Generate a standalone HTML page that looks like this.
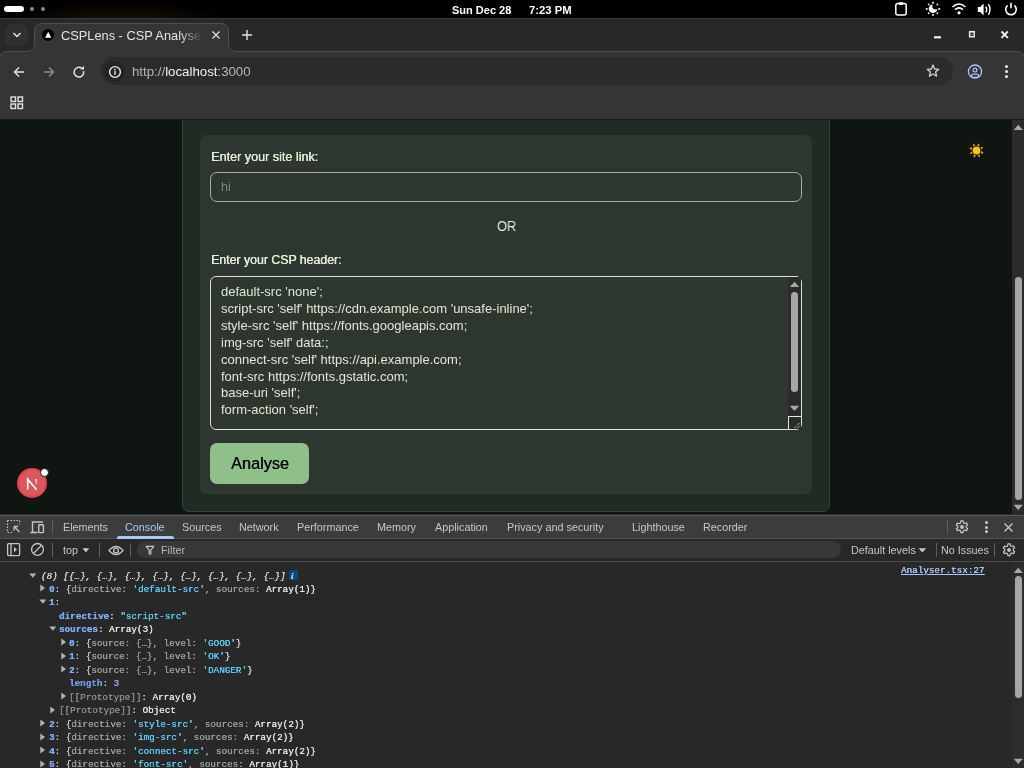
<!DOCTYPE html>
<html><head><meta charset="utf-8">
<style>
*{box-sizing:border-box;margin:0;padding:0}
html,body{width:1024px;height:768px;overflow:hidden;background:#000;font-family:"Liberation Sans",sans-serif}
.a{position:absolute}
#sys{left:0;top:0;width:1024px;height:18px;background:#000}
#tabstrip{left:0;top:18px;width:1024px;height:45px;background:#282828}
#toolbar{left:0;top:51px;width:1024px;height:68px;background:#353535}
#content{left:0;top:119px;width:1024px;height:395px;background:#0f1611;overflow:hidden}
#devtools{left:0;top:514px;width:1024px;height:254px;background:#282828;overflow:hidden}
.txt{white-space:pre;line-height:1;will-change:transform}
</style></head><body>

<!-- system bar -->
<div id="sys" class="a">
  <div class="a" style="left:0;top:0;width:400px;height:18px;background:radial-gradient(ellipse 120px 30px at 120px 30px,rgba(60,45,10,0.55),rgba(0,0,0,0))"></div>
  <div class="a" style="left:4px;top:6px;width:20px;height:6px;border-radius:3px;background:#fff"></div>
  <div class="a" style="left:30px;top:7px;width:4px;height:4px;border-radius:2px;background:#8a8a8a"></div>
  <div class="a" style="left:41px;top:7px;width:4px;height:4px;border-radius:2px;background:#8a8a8a"></div>
  <div class="a txt" style="left:452px;top:4px;font:bold 11px 'Liberation Sans';color:#fff">Sun Dec 28</div>
  <div class="a txt" style="left:529px;top:4px;font:bold 11.3px 'Liberation Sans';color:#fff">7:23 PM</div>
  <svg class="a" style="left:893px;top:0px" width="16" height="17" viewBox="0 0 16 17"><rect x="2.8" y="3.6" width="10.4" height="11.4" rx="2" fill="none" stroke="#fff" stroke-width="1.5"/><rect x="5.6" y="2.3" width="4.8" height="2.8" rx="1" fill="#fff"/></svg>
  <svg class="a" style="left:925px;top:0px" width="16" height="17" viewBox="0 0 16 17"><defs><mask id="mm"><rect width="16" height="17" fill="#fff"/><circle cx="10.6" cy="6.2" r="3.3" fill="#000"/></mask></defs><g fill="#e8e8e8"><rect x="7.1" y="1.9" width="1.8" height="1.8"/><rect x="7.1" y="14" width="1.8" height="1.8"/><rect x="0.8" y="8" width="1.8" height="1.8"/><rect x="13.3" y="8" width="1.8" height="1.8"/><circle cx="3.7" cy="4.5" r="0.95"/><circle cx="12.4" cy="4.5" r="0.95"/><circle cx="3.7" cy="13.3" r="0.95"/><circle cx="12.4" cy="13.3" r="0.95"/></g><circle cx="8" cy="8.7" r="4.3" fill="#fff" mask="url(#mm)"/></svg>
  <svg class="a" style="left:951px;top:1px" width="16" height="15" viewBox="0 0 16 15"><path d="M1.5 6 Q8 0 14.5 6" fill="none" stroke="#fff" stroke-width="1.6"/><path d="M4 8.6 Q8 5 12 8.6" fill="none" stroke="#fff" stroke-width="1.6"/><circle cx="8" cy="11.8" r="1.6" fill="#fff"/></svg>
  <svg class="a" style="left:977px;top:2px" width="16" height="15" viewBox="0 0 16 15"><path d="M0.8 5 L3.2 5 L6.6 1.6 L6.6 13.4 L3.2 10 L0.8 10 Z" fill="#fff"/><path d="M8.8 4.6 Q10.6 7.5 8.8 10.4" fill="none" stroke="#fff" stroke-width="1.4"/><path d="M11.4 2.2 Q14.6 7.5 11.4 12.8" fill="none" stroke="#fff" stroke-width="1.4"/></svg>
  <svg class="a" style="left:1003px;top:0.5px" width="16" height="16" viewBox="0 0 16 16"><path d="M4.6 4.4 A5.3 5.3 0 1 0 11.4 4.4" fill="none" stroke="#fff" stroke-width="1.6"/><path d="M8 1.8 L8 7.2" stroke="#fff" stroke-width="1.6"/></svg>
</div>

<!-- tab strip -->
<div id="tabstrip" class="a">
  <div class="a" style="left:0;top:0;width:1024px;height:1px;background:#383838"></div>
  <div class="a" style="left:5px;top:6px;width:23px;height:22px;border-radius:7px;background:#303030"></div>
  <svg class="a" style="left:11px;top:12px" width="12" height="10" viewBox="0 0 12 10"><path d="M2.5 3 L6 6.5 L9.5 3" fill="none" stroke="#e8e8e8" stroke-width="1.4"/></svg>
</div>
<svg class="a" style="left:0;top:18px" width="1024" height="101" viewBox="0 0 1024 101">
  <path d="M-0.5 110 L-0.5 41.5 Q-0.5 33.5 7.5 33.5 L26.5 33.5 Q34.5 33.5 34.5 25.5 L34.5 13.5 Q34.5 5.5 42.5 5.5 L220.5 5.5 Q228.5 5.5 228.5 13.5 L228.5 25.5 Q228.5 33.5 236.5 33.5 L1016.5 33.5 Q1024.5 33.5 1024.5 41.5 L1024.5 110 L-0.5 110 Z" fill="#353535" stroke="#4f4f4f" stroke-width="1"/>
</svg>
<div class="a" style="left:41.5px;top:28.8px;width:12.4px;height:12.4px;border-radius:50%;background:#000"></div>
<svg class="a" style="left:41.5px;top:28.8px" width="12.4" height="12.4" viewBox="0 0 13 13"><path d="M6.5 2.9 L9.8 9.2 L3.2 9.2 Z" fill="#fff"/></svg>
<div class="a txt" style="left:61px;top:28px;font:12.8px 'Liberation Sans';color:#e3e3e3;width:142px;overflow:hidden;-webkit-mask-image:linear-gradient(90deg,#000 118px,transparent 142px)">CSPLens - CSP Analyser</div>
<svg class="a" style="left:210px;top:29px" width="12" height="12" viewBox="0 0 12 12"><path d="M2.5 2.5 L9.5 9.5 M9.5 2.5 L2.5 9.5" stroke="#e3e3e3" stroke-width="1.3"/></svg>
<svg class="a" style="left:240px;top:28px" width="14" height="14" viewBox="0 0 14 14"><path d="M7 2 L7 12 M2 7 L12 7" stroke="#e3e3e3" stroke-width="1.4"/></svg>
<svg class="a" style="left:930px;top:30px" width="14" height="14" viewBox="0 0 14 14"><path d="M4 7.3 L11 7.3" stroke="#f0f0f0" stroke-width="2.2"/></svg>
<svg class="a" style="left:964px;top:27px" width="14" height="14" viewBox="0 0 14 14"><rect x="5.6" y="4.6" width="4.6" height="5.2" fill="none" stroke="#f0f0f0" stroke-width="1.4"/><rect x="5" y="4" width="5.8" height="1.4" fill="#f0f0f0"/><path d="M6.8 8.6 L8.6 6.8" stroke="#cfcfcf" stroke-width="0.8"/></svg>
<svg class="a" style="left:997px;top:27px" width="14" height="14" viewBox="0 0 14 14"><path d="M4.5 4.5 L10.8 10.8 M10.8 4.5 L4.5 10.8" stroke="#f0f0f0" stroke-width="1.9"/></svg>

<!-- toolbar -->
<div id="toolbar" class="a" style="background:transparent">
  <svg class="a" style="left:12px;top:13.5px" width="14" height="14" viewBox="0 0 14 14"><path d="M12 7 L2.5 7 M7 2.5 L2.5 7 L7 11.5" fill="none" stroke="#e3e3e3" stroke-width="1.5"/></svg>
  <svg class="a" style="left:42px;top:13.5px" width="14" height="14" viewBox="0 0 14 14"><path d="M2 7 L11.5 7 M7 2.5 L11.5 7 L7 11.5" fill="none" stroke="#8c8c8c" stroke-width="1.5"/></svg>
  <svg class="a" style="left:72px;top:13.5px" width="14" height="14" viewBox="0 0 14 14"><path d="M11.6 6.2 A4.8 4.8 0 1 1 10 3.5" fill="none" stroke="#e3e3e3" stroke-width="1.5"/><path d="M8.2 4.6 L12 4.6 L12 0.8 Z" fill="#e3e3e3"/></svg>
  <div class="a" style="left:101px;top:6px;width:852px;height:28px;border-radius:14px;background:#2b2b2b"></div>
  <div class="a" style="left:104px;top:10px;width:21px;height:21px;border-radius:50%;background:#242424"></div>
  <svg class="a" style="left:108px;top:13.5px" width="14" height="14" viewBox="0 0 14 14"><circle cx="7" cy="7" r="5.4" fill="none" stroke="#e8e8e8" stroke-width="1.4"/><rect x="6.3" y="5.8" width="1.4" height="4" fill="#e8e8e8"/><rect x="6.3" y="3.7" width="1.4" height="1.4" fill="#e8e8e8"/></svg>
  <div class="a txt" style="left:132px;top:13px;font:13.25px 'Liberation Sans';color:#b5b5b5">http://<span style="color:#f0f0f0">localhost</span>:3000</div>
  <svg class="a" style="left:925px;top:12px" width="16" height="16" viewBox="0 0 16 16"><path d="M8 2 L9.6 6 L13.8 6.3 L10.6 9 L11.6 13.2 L8 11 L4.4 13.2 L5.4 9 L2.2 6.3 L6.4 6 Z" fill="none" stroke="#d0d0d0" stroke-width="1.3" stroke-linejoin="round"/></svg>
  <svg class="a" style="left:967px;top:13px" width="16" height="16" viewBox="0 0 16 16"><circle cx="8" cy="7.6" r="6.6" fill="none" stroke="#a8c7fa" stroke-width="1.3"/><circle cx="8" cy="6.1" r="1.9" fill="none" stroke="#a8c7fa" stroke-width="1.2"/><rect x="4.5" y="10.1" width="7" height="3.3" rx="1.65" fill="none" stroke="#a8c7fa" stroke-width="1.2"/></svg>
  <div class="a" style="left:1005px;top:14px;width:3px;height:3px;border-radius:50%;background:#e8e8e8"></div>
  <div class="a" style="left:1005px;top:19px;width:3px;height:3px;border-radius:50%;background:#e8e8e8"></div>
  <div class="a" style="left:1005px;top:24px;width:3px;height:3px;border-radius:50%;background:#e8e8e8"></div>
  <svg class="a" style="left:9px;top:44px" width="16" height="16" viewBox="0 0 16 16"><rect x="2" y="2" width="4.5" height="4.5" fill="none" stroke="#e3e3e3" stroke-width="1.4"/><rect x="9" y="2" width="4.5" height="4.5" fill="none" stroke="#e3e3e3" stroke-width="1.4"/><rect x="2" y="9" width="4.5" height="4.5" fill="none" stroke="#e3e3e3" stroke-width="1.4"/><rect x="9" y="9" width="4.5" height="4.5" fill="none" stroke="#e3e3e3" stroke-width="1.4"/></svg>
</div>

<!-- content -->
<div id="content" class="a">
  <div class="a" style="left:182px;top:-10px;width:648px;height:403px;background:#212a23;border:1px solid #354438;border-radius:7px"></div>
  <div class="a" style="left:200px;top:16px;width:612px;height:359px;background:#2d372f;border-radius:6px"></div>
  <div class="a txt" style="left:210.5px;top:31px;font:12.6px 'Liberation Sans';color:#e6ead6;text-shadow:0.4px 0 0 #e6ead6">Enter your site link:</div>
  <div class="a" style="left:210px;top:53px;width:592px;height:30px;border:1px solid #a9b29b;border-radius:7px"></div>
  <div class="a txt" style="left:221px;top:61px;font:12.5px 'Liberation Sans';color:#7b8878">hi</div>
  <div class="a txt" style="left:497px;top:99px;font:14.6px 'Liberation Sans';color:#e6ead6;transform:scaleX(0.88);transform-origin:0 0">OR</div>
  <div class="a txt" style="left:210.5px;top:134px;font:12.3px 'Liberation Sans';color:#e6ead6;text-shadow:0.4px 0 0 #e6ead6">Enter your CSP header:</div>
  <div class="a" style="left:210px;top:157px;width:592px;height:154px;border:1px solid #dde4c8;border-radius:6px"></div>
  <div class="a" style="left:221px;top:165px;font:13px 'Liberation Sans';line-height:16.9px;color:#e3e7d3;white-space:pre;will-change:transform">default-src 'none';
script-src 'self' https://cdn.example.com 'unsafe-inline';
style-src 'self' https://fonts.googleapis.com;
img-src 'self' data:;
connect-src 'self' https://api.example.com;
font-src https://fonts.gstatic.com;
base-uri 'self';
form-action 'self';</div>
  <div class="a" style="left:788px;top:158px;width:13px;height:139px;background:#2b2b2b"></div>
  <svg class="a" style="left:789px;top:162px" width="11" height="7" viewBox="0 0 11 7"><path d="M0.8 6 L5.5 0.8 L10.2 6 Z" fill="#a8a8a8"/></svg>
  <div class="a" style="left:791px;top:172.5px;width:7px;height:100.5px;border-radius:3.5px;background:#a6a6a6"></div>
  <svg class="a" style="left:789px;top:286px" width="11" height="7" viewBox="0 0 11 7"><path d="M0.8 0.8 L10.2 0.8 L5.5 6 Z" fill="#a8a8a8"/></svg>
  <div class="a" style="left:788px;top:297px;width:13px;height:13px;background:#2b2b2b;border-left:1px solid #e6e6e6;border-top:1px solid #e6e6e6"></div>
  <svg class="a" style="left:788px;top:297px" width="13" height="13" viewBox="0 0 13 13"><path d="M6.5 12 L12 6.5 M9.5 12 L12 9.5" stroke="#e0e0e0" stroke-width="1" stroke-dasharray="1.2 0.8"/></svg>
  <div class="a" style="left:210px;top:324px;width:99px;height:41px;background:#8fc08a;border-radius:7px"></div>
  <div class="a txt" style="left:230.5px;top:335px;font:16.3px 'Liberation Sans';color:#0d0d0d;text-shadow:0.35px 0 0 #0d0d0d">Analyse</div>
  <div class="a" style="left:1012px;top:0;width:12px;height:395px;background:#2b2b2b"></div>
  <svg class="a" style="left:1013px;top:5px" width="11" height="7" viewBox="0 0 11 7"><path d="M0.7 6 L5.2 0.7 L9.9 6 Z" fill="#a8a8a8"/></svg>
  <div class="a" style="left:1015px;top:158px;width:7px;height:223px;border-radius:3.5px;background:#a6a6a6"></div>
  <svg class="a" style="left:1013px;top:385px" width="11" height="7" viewBox="0 0 11 7"><path d="M0.7 0.8 L9.9 0.8 L5.2 6 Z" fill="#a8a8a8"/></svg>
  <div class="a" style="left:17px;top:349px;width:30px;height:30px;border-radius:50%;background:#d9575d;border:2px solid #e2434c"></div>
  <svg class="a" style="left:25px;top:358px" width="14" height="14" viewBox="0 0 14 14"><defs><linearGradient id="ng" gradientUnits="userSpaceOnUse" x1="0" y1="2" x2="0" y2="9"><stop offset="0" stop-color="#fff"/><stop offset="1" stop-color="#fff" stop-opacity="0"/></linearGradient></defs><path d="M2.7 12.6 L2.7 2.2 L11.6 12.8" fill="none" stroke="#fff" stroke-width="1.6" stroke-linejoin="miter"/><rect x="10.4" y="2" width="1.6" height="7.5" fill="url(#ng)"/></svg>
  <div class="a" style="left:39.5px;top:348.5px;width:9px;height:9px;border-radius:50%;background:#fff;border:1.2px solid #0f1611"></div>
  <svg class="a" style="left:968px;top:23px" width="17" height="17" viewBox="0 0 17 17"><g fill="#f5a524" transform="rotate(20 8.5 8.5)"><path d="M8.5 0.8 L9.9 3.6 L7.1 3.6 Z"/><path d="M8.5 16.2 L9.9 13.4 L7.1 13.4 Z"/><path d="M0.8 8.5 L3.6 7.1 L3.6 9.9 Z"/><path d="M16.2 8.5 L13.4 7.1 L13.4 9.9 Z"/><path d="M3 3 L5.9 4.1 L4.1 5.9 Z"/><path d="M14 14 L11.1 12.9 L12.9 11.1 Z"/><path d="M14 3 L12.9 5.9 L11.1 4.1 Z"/><path d="M3 14 L4.1 11.1 L5.9 12.9 Z"/></g><circle cx="8.5" cy="8.5" r="3.9" fill="#fbc31c"/></svg>
  <div class="a" style="left:0;top:0;width:1024px;height:1px;background:#1b1c1b"></div>
</div>

<!-- devtools -->
<div id="devtools" class="a">
  <div class="a" style="left:0;top:1px;width:1024px;height:1px;background:#5a5a5a"></div>
  <div class="a" style="left:0;top:2px;width:1024px;height:22px;background:#3c3c3c"></div>
  <div class="a" style="left:0;top:24px;width:1024px;height:1px;background:#555"></div>
  <div class="a" style="left:0;top:47px;width:1024px;height:1px;background:#4a4a4a"></div>
  <div class="a" style="left:117px;top:22px;width:57px;height:3px;background:#a8c7fa;border-radius:2px 2px 0 0"></div>
  <svg class="a" style="left:5px;top:4px" width="18" height="18" viewBox="0 0 18 18"><path d="M2.5 2.5h1.5M5.5 2.5h1.5M8.5 2.5h1.5M11.5 2.5h1.5M2.5 2.5v1.5M2.5 5.5v1.5M2.5 8.5v1.5M2.5 11.5v1.5M2.5 14.5h1.5M5.5 14.5h1.5M14.5 2.5v1.5M14.5 5.5v1" stroke="#c4c4c4" stroke-width="1.2" fill="none"/><path d="M9 8.5 L14.5 14 M9 8.5 L13 8.5 M9 8.5 L9 12.5" stroke="#c4c4c4" stroke-width="1.3" fill="none"/></svg>
  <svg class="a" style="left:29px;top:4px" width="18" height="18" viewBox="0 0 18 18"><path d="M3.5 15 L3.5 4 L14 4" stroke="#c4c4c4" stroke-width="1.4" fill="none"/><path d="M1.5 14.5 L8.5 14.5" stroke="#c4c4c4" stroke-width="1.6"/><rect x="9.8" y="6.8" width="4.6" height="7.8" rx="0.6" fill="none" stroke="#c4c4c4" stroke-width="1.4"/></svg>
  <div class="a" style="left:52px;top:6px;width:1px;height:14px;background:#5e5e5e"></div>
  <div class="a txt" style="left:63px;top:6.9px;font:10.8px 'Liberation Sans';color:#c7c7c7">Elements</div><div class="a txt" style="left:125px;top:6.9px;font:10.8px 'Liberation Sans';color:#a8c7fa">Console</div><div class="a txt" style="left:182px;top:6.9px;font:10.8px 'Liberation Sans';color:#c7c7c7">Sources</div><div class="a txt" style="left:238.5px;top:6.9px;font:10.8px 'Liberation Sans';color:#c7c7c7">Network</div><div class="a txt" style="left:297px;top:6.9px;font:10.8px 'Liberation Sans';color:#c7c7c7">Performance</div><div class="a txt" style="left:377px;top:6.9px;font:10.8px 'Liberation Sans';color:#c7c7c7">Memory</div><div class="a txt" style="left:434.5px;top:6.9px;font:10.8px 'Liberation Sans';color:#c7c7c7">Application</div><div class="a txt" style="left:507px;top:6.9px;font:10.8px 'Liberation Sans';color:#c7c7c7">Privacy and security</div><div class="a txt" style="left:632px;top:6.9px;font:10.8px 'Liberation Sans';color:#c7c7c7">Lighthouse</div><div class="a txt" style="left:702.5px;top:6.9px;font:10.8px 'Liberation Sans';color:#c7c7c7">Recorder</div>
  <div class="a" style="left:872px;top:6px;width:1px;height:14px;background:#5e5e5e;display:none"></div>
  <div class="a" style="left:947px;top:6px;width:1px;height:14px;background:#5e5e5e"></div>
  <svg class="a" style="left:954px;top:5px" width="16" height="16" viewBox="0 0 16 16"><path d="M6.9 1.8h2.2l.35 1.9 1.3.75 1.8-.65 1.1 1.9-1.45 1.25v1.5l1.45 1.25-1.1 1.9-1.8-.65-1.3.75-.35 1.9H6.9l-.35-1.9-1.3-.75-1.8.65-1.1-1.9L3.8 8.8V7.3L2.35 6l1.1-1.9 1.8.65 1.3-.75z" fill="none" stroke="#c7c7c7" stroke-width="1.2" stroke-linejoin="round"/><circle cx="8" cy="8" r="1.9" fill="#c7c7c7"/></svg>
  <div class="a" style="left:984.5px;top:7px;width:3px;height:3px;border-radius:50%;background:#c7c7c7"></div>
  <div class="a" style="left:984.5px;top:11.5px;width:3px;height:3px;border-radius:50%;background:#c7c7c7"></div>
  <div class="a" style="left:984.5px;top:16px;width:3px;height:3px;border-radius:50%;background:#c7c7c7"></div>
  <svg class="a" style="left:1002px;top:7px" width="13" height="13" viewBox="0 0 13 13"><path d="M2.5 2.5 L10.5 10.5 M10.5 2.5 L2.5 10.5" stroke="#c7c7c7" stroke-width="1.3"/></svg>

  <div class="a" style="left:0;top:25px;width:1024px;height:22px;background:#282828"></div>
  <svg class="a" style="left:5px;top:27px" width="18" height="18" viewBox="0 0 18 18"><rect x="2.6" y="2.6" width="12" height="12" rx="1" fill="none" stroke="#c4c4c4" stroke-width="1.3"/><path d="M6 2.6 L6 14.6" stroke="#c4c4c4" stroke-width="1.3"/><path d="M9 6 L12 8.6 L9 11.2 Z" fill="#c4c4c4"/></svg>
  <svg class="a" style="left:29px;top:27px" width="18" height="18" viewBox="0 0 18 18"><circle cx="8.5" cy="8.4" r="5.9" fill="none" stroke="#c4c4c4" stroke-width="1.3"/><path d="M4.4 12.5 L12.6 4.3" stroke="#c4c4c4" stroke-width="1.3"/></svg>
  <div class="a" style="left:52px;top:29px;width:1px;height:14px;background:#5e5e5e"></div>
  <div class="a txt" style="left:63px;top:30.4px;font:10.8px 'Liberation Sans';color:#c7c7c7">top</div>
  <svg class="a" style="left:82px;top:34px" width="8" height="5" viewBox="0 0 8 5"><path d="M0.5 0.3 L7.2 0.3 L3.85 4.6 Z" fill="#c7c7c7"/></svg>
  <div class="a" style="left:99px;top:29px;width:1px;height:14px;background:#5e5e5e"></div>
  <svg class="a" style="left:107.5px;top:31px" width="16" height="11" viewBox="0 0 16 11"><path d="M1 5.5 Q8 -2.5 15 5.5 Q8 13.5 1 5.5 Z" fill="none" stroke="#c4c4c4" stroke-width="1.3"/><circle cx="8" cy="5.5" r="2.4" fill="none" stroke="#c4c4c4" stroke-width="1.3"/></svg>
  <div class="a" style="left:130px;top:29px;width:1px;height:14px;background:#5e5e5e"></div>
  <div class="a" style="left:137px;top:27px;width:704px;height:17px;border-radius:9px;background:#383838"></div>
  <svg class="a" style="left:145px;top:31px" width="10" height="10" viewBox="0 0 10 10"><path d="M1.2 1.3 L8.8 1.3 L5.8 5.2 L5.8 9 L4.2 9 L4.2 5.2 Z" fill="none" stroke="#c4c4c4" stroke-width="1.2" stroke-linejoin="round"/></svg>
  <div class="a txt" style="left:160.5px;top:30.4px;font:10.8px 'Liberation Sans';color:#b8b8b8">Filter</div>
  <div class="a txt" style="left:850.5px;top:30.4px;font:10.8px 'Liberation Sans';color:#c7c7c7">Default levels</div>
  <svg class="a" style="left:918px;top:34px" width="9" height="5" viewBox="0 0 9 5"><path d="M0.5 0.3 L8.2 0.3 L4.35 4.6 Z" fill="#c7c7c7"/></svg>
  <div class="a" style="left:936px;top:29px;width:1px;height:14px;background:#5e5e5e"></div>
  <div class="a txt" style="left:940.5px;top:30.4px;font:10.8px 'Liberation Sans';color:#c7c7c7">No Issues</div>
  <div class="a" style="left:994px;top:29px;width:1px;height:14px;background:#5e5e5e"></div>
  <svg class="a" style="left:1000.5px;top:28px" width="16" height="16" viewBox="0 0 16 16"><path d="M6.9 1.8h2.2l.35 1.9 1.3.75 1.8-.65 1.1 1.9-1.45 1.25v1.5l1.45 1.25-1.1 1.9-1.8-.65-1.3.75-.35 1.9H6.9l-.35-1.9-1.3-.75-1.8.65-1.1-1.9L3.8 8.8V7.3L2.35 6l1.1-1.9 1.8.65 1.3-.75z" fill="none" stroke="#c7c7c7" stroke-width="1.2" stroke-linejoin="round"/><circle cx="8" cy="8" r="1.9" fill="#c7c7c7"/></svg>

  <div id="console" class="a" style="left:0;top:0;width:1024px;height:254px;font:9.27px 'Liberation Mono';line-height:13.5px;text-shadow:0.25px 0 0 currentColor">
<svg class="a" style="left:28.5px;top:58.70px" width="8" height="6" viewBox="0 0 8 6"><path d="M0.3 0.6 L7.3 0.6 L3.8 4.8 Z" fill="#b4b4b4"/></svg><div class="a txt" style="left:40.80px;top:57.60px"><span style="color:#d4d4d4;font-style:italic">(8) [{…}, {…}, {…}, {…}, {…}, {…}, {…}, {…}]</span></div>
<svg class="a" style="left:40px;top:70.40px" width="6" height="8" viewBox="0 0 6 8"><path d="M0.3 0.4 L5 4 L0.3 7.6 Z" fill="#b4b4b4"/></svg><div class="a txt" style="left:48.80px;top:70.80px"><span style="color:#7cacf8;font-weight:bold">0</span><span style="color:#cfcfcf">: </span><span style="color:#cfcfcf">{</span><span style="color:#9e9e9e">directive: </span><span style="color:#5ccbf3">'default-src'</span><span style="color:#9e9e9e">, sources: </span><span style="color:#e3e3e3">Array(1)}</span></div>
<svg class="a" style="left:38.5px;top:85.40px" width="8" height="6" viewBox="0 0 8 6"><path d="M0.3 0.6 L7.3 0.6 L3.8 4.8 Z" fill="#b4b4b4"/></svg><div class="a txt" style="left:48.80px;top:84.30px"><span style="color:#7cacf8;font-weight:bold">1</span><span style="color:#cfcfcf">:</span></div>
<div class="a txt" style="left:58.80px;top:97.80px"><span style="color:#7cacf8;font-weight:bold">directive</span><span style="color:#cfcfcf">: </span><span style="color:#5ccbf3">"script-src"</span></div>
<svg class="a" style="left:49px;top:112.40px" width="8" height="6" viewBox="0 0 8 6"><path d="M0.3 0.6 L7.3 0.6 L3.8 4.8 Z" fill="#b4b4b4"/></svg><div class="a txt" style="left:58.80px;top:111.30px"><span style="color:#7cacf8;font-weight:bold">sources</span><span style="color:#cfcfcf">: </span><span style="color:#e3e3e3">Array(3)</span></div>
<svg class="a" style="left:60.5px;top:124.40px" width="6" height="8" viewBox="0 0 6 8"><path d="M0.3 0.4 L5 4 L0.3 7.6 Z" fill="#b4b4b4"/></svg><div class="a txt" style="left:69.30px;top:124.80px"><span style="color:#7cacf8;font-weight:bold">0</span><span style="color:#cfcfcf">: </span><span style="color:#cfcfcf">{</span><span style="color:#9e9e9e">source: {…}, level: </span><span style="color:#5ccbf3">'GOOD'</span><span style="color:#cfcfcf">}</span></div>
<svg class="a" style="left:60.5px;top:137.90px" width="6" height="8" viewBox="0 0 6 8"><path d="M0.3 0.4 L5 4 L0.3 7.6 Z" fill="#b4b4b4"/></svg><div class="a txt" style="left:69.30px;top:138.30px"><span style="color:#7cacf8;font-weight:bold">1</span><span style="color:#cfcfcf">: </span><span style="color:#cfcfcf">{</span><span style="color:#9e9e9e">source: {…}, level: </span><span style="color:#5ccbf3">'OK'</span><span style="color:#cfcfcf">}</span></div>
<svg class="a" style="left:60.5px;top:151.40px" width="6" height="8" viewBox="0 0 6 8"><path d="M0.3 0.4 L5 4 L0.3 7.6 Z" fill="#b4b4b4"/></svg><div class="a txt" style="left:69.30px;top:151.80px"><span style="color:#7cacf8;font-weight:bold">2</span><span style="color:#cfcfcf">: </span><span style="color:#cfcfcf">{</span><span style="color:#9e9e9e">source: {…}, level: </span><span style="color:#5ccbf3">'DANGER'</span><span style="color:#cfcfcf">}</span></div>
<div class="a txt" style="left:69.30px;top:165.30px"><span style="color:#6f95d6;font-weight:bold">length</span><span style="color:#cfcfcf">: </span><span style="color:#a39cf5">3</span></div>
<svg class="a" style="left:60.5px;top:178.40px" width="6" height="8" viewBox="0 0 6 8"><path d="M0.3 0.4 L5 4 L0.3 7.6 Z" fill="#b4b4b4"/></svg><div class="a txt" style="left:69.30px;top:178.80px"><span style="color:#8c8c8c">[[Prototype]]</span><span style="color:#cfcfcf">: </span><span style="color:#e3e3e3">Array(0)</span></div>
<svg class="a" style="left:50px;top:191.90px" width="6" height="8" viewBox="0 0 6 8"><path d="M0.3 0.4 L5 4 L0.3 7.6 Z" fill="#b4b4b4"/></svg><div class="a txt" style="left:58.80px;top:192.30px"><span style="color:#8c8c8c">[[Prototype]]</span><span style="color:#cfcfcf">: </span><span style="color:#e3e3e3">Object</span></div>
<svg class="a" style="left:40px;top:205.40px" width="6" height="8" viewBox="0 0 6 8"><path d="M0.3 0.4 L5 4 L0.3 7.6 Z" fill="#b4b4b4"/></svg><div class="a txt" style="left:48.80px;top:205.80px"><span style="color:#7cacf8;font-weight:bold">2</span><span style="color:#cfcfcf">: </span><span style="color:#cfcfcf">{</span><span style="color:#9e9e9e">directive: </span><span style="color:#5ccbf3">'style-src'</span><span style="color:#9e9e9e">, sources: </span><span style="color:#e3e3e3">Array(2)}</span></div>
<svg class="a" style="left:40px;top:218.90px" width="6" height="8" viewBox="0 0 6 8"><path d="M0.3 0.4 L5 4 L0.3 7.6 Z" fill="#b4b4b4"/></svg><div class="a txt" style="left:48.80px;top:219.30px"><span style="color:#7cacf8;font-weight:bold">3</span><span style="color:#cfcfcf">: </span><span style="color:#cfcfcf">{</span><span style="color:#9e9e9e">directive: </span><span style="color:#5ccbf3">'img-src'</span><span style="color:#9e9e9e">, sources: </span><span style="color:#e3e3e3">Array(2)}</span></div>
<svg class="a" style="left:40px;top:232.40px" width="6" height="8" viewBox="0 0 6 8"><path d="M0.3 0.4 L5 4 L0.3 7.6 Z" fill="#b4b4b4"/></svg><div class="a txt" style="left:48.80px;top:232.80px"><span style="color:#7cacf8;font-weight:bold">4</span><span style="color:#cfcfcf">: </span><span style="color:#cfcfcf">{</span><span style="color:#9e9e9e">directive: </span><span style="color:#5ccbf3">'connect-src'</span><span style="color:#9e9e9e">, sources: </span><span style="color:#e3e3e3">Array(2)}</span></div>
<svg class="a" style="left:40px;top:245.90px" width="6" height="8" viewBox="0 0 6 8"><path d="M0.3 0.4 L5 4 L0.3 7.6 Z" fill="#b4b4b4"/></svg><div class="a txt" style="left:48.80px;top:246.30px"><span style="color:#7cacf8;font-weight:bold">5</span><span style="color:#cfcfcf">: </span><span style="color:#cfcfcf">{</span><span style="color:#9e9e9e">directive: </span><span style="color:#5ccbf3">'font-src'</span><span style="color:#9e9e9e">, sources: </span><span style="color:#e3e3e3">Array(1)}</span></div>
<div class="a" style="left:289px;top:56.3px;width:9px;height:9.5px;border-radius:2px;background:#0b4a80"></div><div class="a txt" style="left:291.4px;top:57px;font:italic bold 8.5px 'Liberation Serif';color:#c2dcf5">i</div>
<div class="a txt" style="left:900.5px;top:52.30px;color:#a8c7fa;text-decoration:underline">Analyser.tsx:27</div>
<div class="a" style="left:1012px;top:48px;width:12px;height:206px;background:#2c2c2c"></div>
<svg class="a" style="left:1013px;top:52.5px" width="11" height="7" viewBox="0 0 11 7"><path d="M0.7 6 L5.2 0.7 L9.9 6 Z" fill="#a8a8a8"/></svg>
<div class="a" style="left:1015px;top:62px;width:7px;height:122px;border-radius:3.5px;background:#a6a6a6"></div>
<svg class="a" style="left:1013px;top:243.5px" width="11" height="7" viewBox="0 0 11 7"><path d="M0.7 0.8 L9.9 0.8 L5.2 6 Z" fill="#a8a8a8"/></svg>
</div>
</div>

</body></html>
